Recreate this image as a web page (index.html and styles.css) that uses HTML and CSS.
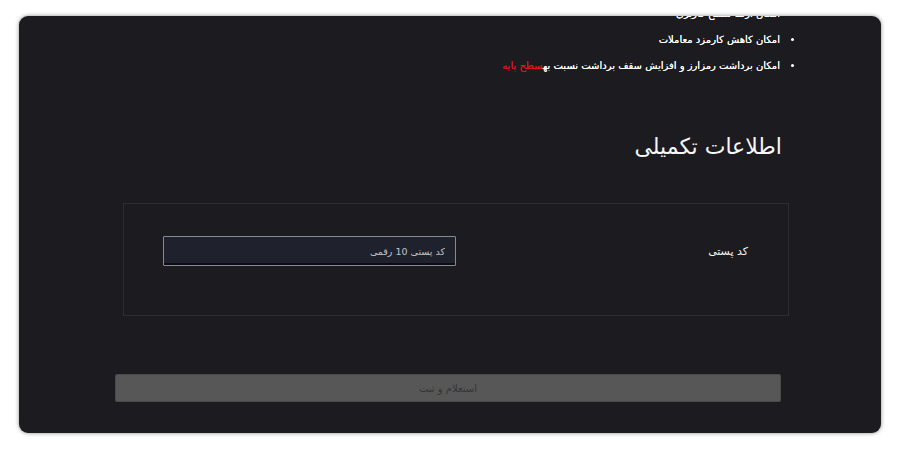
FILE: index.html
```html
<!DOCTYPE html>
<html lang="fa" dir="rtl">
<head>
<meta charset="utf-8">
<link rel="stylesheet" href="styles.css">
</head>
<body>
<div class="card">
  <ul class="features">
    <li>امکان ارتقا سطح کاربری</li>
    <li>امکان کاهش کارمزد معاملات</li>
    <li>امکان برداشت رمزارز و افزایش سقف برداشت نسبت به<span class="hl">سطح پایه</span></li>
  </ul>
  <h2 class="title">اطلاعات تکمیلی</h2>
  <div class="box">
    <label class="label" for="zip">کد پستی</label>
    <input class="input" id="zip" type="text" placeholder="کد پستی 10 رقمی">
  </div>
  <button class="submit" type="button" disabled>استعلام و ثبت</button>
</div>
</body>
</html>
```
FILE: styles.css
```css
html, body {
  margin: 0;
  padding: 0;
  background: #ffffff;
}
body {
  font-family: "DejaVu Sans", sans-serif;
  padding: 16px 19px 17px 19px;
}
.card {
  height: 417px;
  background: #1c1b20;
  border-radius: 9px;
  box-shadow: 0 0 4px rgba(0, 0, 0, 0.45);
  overflow: hidden;
  color: #f2f2f2;
}
.features {
  margin: -15px 74px 0 0;
  padding: 0 26px 0 0;
  list-style: disc;
  font-size: 10px;
  line-height: 26px;
  color: #ffffff;
  text-shadow: 0 0 0.4px #ffffff;
}
.features li {
  padding-right: 1px;
}
.hl {
  color: #e3101c;
  text-shadow: 0 0 0.4px #e3101c;
}
.title {
  margin: 53px 99px 0 0;
  font-size: 22px;
  font-weight: normal;
  line-height: 30px;
  color: #f7f7f7;
}
.box {
  margin: 41px 92px 0 104px;
  border: 1px solid #2c2c31;
  padding: 32px 40px 49px 40px;
  display: flex;
  justify-content: space-between;
  align-items: center;
}
.label {
  font-size: 11px;
  color: #f7f7f7;
}
.input {
  width: 293px;
  height: 30px;
  margin-left: -1px;
  box-sizing: border-box;
  background: #1f222c;
  border: 1px solid #8a8a8a;
  box-shadow: inset 0 -2px 0 #0a0c18;
  border-radius: 1px;
  padding: 0 10px;
  font-family: "DejaVu Sans", sans-serif;
  font-size: 9.5px;
  color: #ddd;
  direction: rtl;
}
.input::placeholder {
  color: #c2c2c2;
}
.submit {
  display: block;
  box-sizing: border-box;
  margin: 58px 100px 0 96px;
  width: calc(100% - 196px);
  height: 28px;
  background: #575757;
  border: 1px solid #4a4a4a;
  border-radius: 2px;
  font-family: "DejaVu Sans", sans-serif;
  font-size: 10px;
  color: #353535;
}
```
